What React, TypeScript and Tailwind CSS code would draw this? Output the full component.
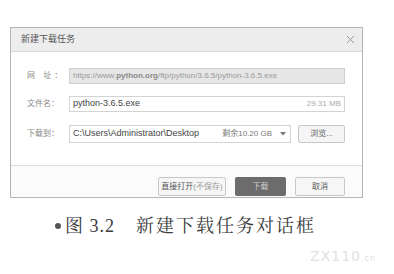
export default function App() {
  return (
    <div className="w-[394px] h-[274px] bg-white pt-[27px] pl-[10px] font-['Liberation_Sans','Noto_Sans_CJK_SC',sans-serif] text-[#555]">
      <div className="w-[353px] h-[171px] border border-[#b5b5b5] flex flex-col">
        <div className="h-[24px] bg-[#ededed] border-b border-[#d8d8d8] flex items-center justify-between pl-[10px] pr-[7px]">
          <span className="text-[9px] text-[#555]">新建下载任务</span>
          <svg width="9" height="9" viewBox="0 0 9 9" className="text-[#999]">
            <path d="M1 1L8 8M8 1L1 8" stroke="currentColor" strokeWidth="1" />
          </svg>
        </div>
        <div className="flex flex-col gap-[12px] pt-[16px] pl-[16px] pr-[17px]">
          <div className="flex items-center">
            <span className="w-[42px] text-[8px] text-[#888] tracking-[3px]">网 址：</span>
            <div className="flex-1 h-[16px] bg-[#e6e6e6] border border-[#cfcfcf] flex items-center px-[3px] text-[8px] text-[#9a9a9a] truncate">
              https://www.<span className="font-bold text-[#8a8a8a]">python.org</span>/ftp/python/3.6.5/python-3.6.5.exe
            </div>
          </div>
          <div className="flex items-center">
            <span className="w-[42px] text-[8px] text-[#888]">文件名：</span>
            <div className="flex-1 h-[16px] bg-white border border-[#d3d3d3] flex items-center justify-between px-[3px]">
              <span className="text-[9px] text-[#444]">python-3.6.5.exe</span>
              <span className="text-[8px] text-[#aaa]">29.31 MB</span>
            </div>
          </div>
          <div className="flex items-center mt-[1px]">
            <span className="w-[42px] text-[8px] text-[#888]">下载到：</span>
            <div className="flex-1 h-[18px] bg-white border border-[#d3d3d3] flex items-center justify-between pl-[3px] pr-[4px]">
              <span className="text-[9px] text-[#444]">C:\Users\Administrator\Desktop</span>
              <div className="flex items-center gap-[8px]">
                <span className="text-[8px] text-[#777]">剩余10.20 GB</span>
                <svg width="6" height="4" viewBox="0 0 6 4">
                  <path d="M0 0H6L3 3.5Z" fill="#777" />
                </svg>
              </div>
            </div>
            <div className="ml-[7px] w-[47px] h-[18px] border border-[#c8c8c8] bg-[#f5f5f5] rounded-[2px] flex items-center justify-center text-[8px] text-[#666]">
              浏览...
            </div>
          </div>
        </div>
        <div className="mt-[22px] border-t border-[#dcdcdc] flex-1 flex justify-end items-start pt-[11px] pr-[17px] gap-[9px] bg-[#fbfbfb]">
          <div className="w-[68px] h-[19px] border border-[#c8c8c8] bg-[#f6f6f6] rounded-[2px] flex items-center justify-center text-[8px] text-[#555]">
            直接打开<span className="text-[#999]">(不保存)</span>
          </div>
          <div className="w-[51px] h-[19px] bg-[#6c6c6c] rounded-[2px] flex items-center justify-center text-[8px] text-[#d0d0d0]">
            下载
          </div>
          <div className="w-[50px] h-[19px] border border-[#c8c8c8] bg-[#f6f6f6] rounded-[2px] flex items-center justify-center text-[8px] text-[#555]">
            取消
          </div>
        </div>
      </div>
      <div className="mt-[19px] flex items-center pl-[45px] font-['Liberation_Serif','Noto_Serif_CJK_SC','Noto_Sans_CJK_SC',serif] text-[18px] text-[#3a3a3a] leading-none">
        <span className="w-[6px] h-[6px] rounded-full bg-[#555] mr-[4px]"></span>
        <span className="tracking-[1px]">图 3.2</span>
        <span className="ml-[21px] tracking-[2px]">新建下载任务对话框</span>
      </div>
      <div className="flex justify-end pr-[18px] mt-[11px]">
        <span className="text-[14px] text-[#e2e2e2] font-['DejaVu_Sans',sans-serif] tracking-[1px]">ZX110<span className="text-[8px]">.cn</span></span>
      </div>
    </div>
  );
}
